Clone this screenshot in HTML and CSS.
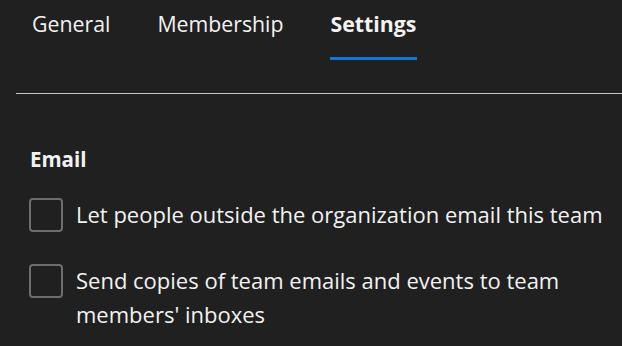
FILE: index.html
```html
<!DOCTYPE html>
<html>
<head>
<meta charset="utf-8">
<link rel="stylesheet" href="styles.css">
</head>
<body>
<div class="page">
  <nav class="tabs">
    <div class="tab">General</div>
    <div class="tab">Membership</div>
    <div class="tab active">Settings</div>
  </nav>
  <div class="divider"></div>
  <section class="section">
    <h2 class="heading">Email</h2>
    <label class="option">
      <span class="box"></span>
      <span class="label">Let people outside the organization email this team</span>
    </label>
    <label class="option">
      <span class="box"></span>
      <span class="label">Send copies of team emails and events to team members' inboxes</span>
    </label>
  </section>
</div>
</body>
</html>
```
FILE: styles.css
```css
html, body {
  margin: 0;
  padding: 0;
  background: #202020;
  height: 100%;
  overflow: hidden;
}
.page {
  font-family: "Open Sans", "Noto Sans", sans-serif;
  color: #f2f2f2;
}
.tabs {
  display: flex;
  gap: 47px;
  padding-left: 32px;
  height: 61px;
}
.tab {
  font-size: 21.3px;
  line-height: 24px;
  padding-top: 12px;
  position: relative;
}
.tab.active {
  font-weight: 700;
}
.tab.active::after {
  content: "";
  position: absolute;
  left: -1px;
  right: -1px;
  top: 57px;
  height: 3px;
  background: #0f78d4;
}
.divider {
  margin: 32px 0 0 16px;
  height: 1px;
  background: #c8c8c8;
}
.section {
  padding-left: 29px;
  padding-right: 16px;
}
.heading {
  margin: 53px 0 0 1px;
  font-size: 20.5px;
  font-weight: 700;
  line-height: 24px;
}
.option {
  display: flex;
  align-items: flex-start;
  gap: 13px;
  margin-top: 27px;
}
.option + .option {
  margin-top: 32px;
}
.box {
  flex: none;
  width: 30px;
  height: 30px;
  border: 2px solid #6e6e6e;
  border-radius: 4px;
}
.label {
  font-size: 22px;
  line-height: 34px;
  margin-top: -1px;
}
```
